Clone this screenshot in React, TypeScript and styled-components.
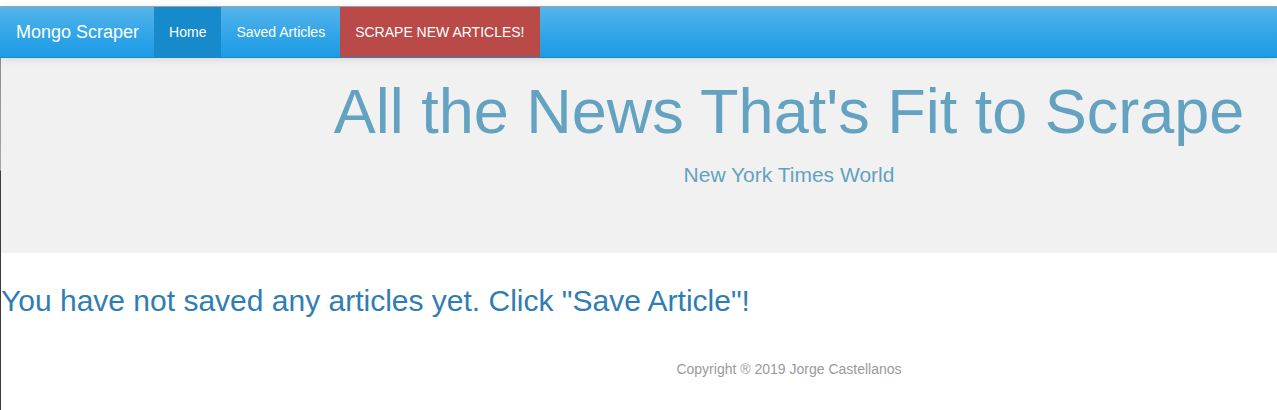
import React from "react";
import styled, { createGlobalStyle } from "styled-components";

const GlobalStyle = createGlobalStyle`
  html, body {
    margin: 0;
    padding: 0;
    background: #ffffff;
    font-family: "Liberation Sans", Arial, Helvetica, sans-serif;
  }
  * { box-sizing: border-box; }
`;

const Page = styled.div`
  position: relative;
  min-height: 410px;
  overflow: hidden;
`;

const EdgeLine = styled.div`
  position: absolute;
  left: 0;
  top: 58px;
  bottom: 0;
  width: 1px;
  background: linear-gradient(to bottom, #8c8c8c 0, #a6a6a6 112px, #3c3c3c 113px, #3c3c3c 100%);
`;

const TopStrip = styled.div`
  height: 7px;
  background: #ffffff;
  border-bottom: 1px solid #a8a8a8;
`;

const Navbar = styled.nav`
  display: flex;
  align-items: stretch;
  height: 51px;
  background-image: linear-gradient(#54b4eb, #2fa4e7 60%, #1d9ce5);
  border-bottom: 1px solid #178acc;
  box-shadow: 0 1px 8px rgba(0, 0, 0, 0.12);
  position: relative;
  z-index: 1;
`;

const Brand = styled.a`
  display: flex;
  align-items: center;
  padding: 0 15px 0 16px;
  font-size: 18px;
  color: #ffffff;
  text-decoration: none;
`;

const NavItem = styled.a<{ $variant?: "active" | "danger" }>`
  display: flex;
  align-items: center;
  padding: 0 15px;
  font-size: 14px;
  color: #ffffff;
  text-decoration: none;
  background: ${(p) =>
    p.$variant === "active" ? "#178acc" : p.$variant === "danger" ? "#b94a48" : "transparent"};
`;

const Jumbotron = styled.header`
  height: 195px;
  background: #f1f1f1;
  padding: 19px 0 0 301px;
  text-align: center;
  color: #63a2c1;
`;

const Title = styled.h1`
  margin: 0;
  font-size: 63px;
  font-weight: 400;
  line-height: 1.1;
  white-space: nowrap;
`;

const Subtitle = styled.p`
  margin: 17px 0 0;
  font-size: 21px;
  line-height: 1.1;
`;

const Message = styled.h2`
  margin: 31px 0 0;
  padding-left: 1px;
  font-size: 30px;
  font-weight: 400;
  line-height: 1.1;
  color: #2f7db3;
`;

const Footer = styled.footer`
  margin-top: 42px;
  padding-left: 301px;
  text-align: center;
  font-size: 14px;
  line-height: 20px;
  color: #9a9a9a;
`;

export default function App() {
  return (
    <Page>
      <GlobalStyle />
      <TopStrip />
      <Navbar>
        <Brand href="#">Mongo Scraper</Brand>
        <NavItem href="#" $variant="active">Home</NavItem>
        <NavItem href="#">Saved Articles</NavItem>
        <NavItem href="#" $variant="danger">SCRAPE NEW ARTICLES!</NavItem>
      </Navbar>
      <Jumbotron>
        <Title>All the News That's Fit to Scrape</Title>
        <Subtitle>New York Times World</Subtitle>
      </Jumbotron>
      <Message>You have not saved any articles yet. Click "Save Article"!</Message>
      <Footer>Copyright ® 2019 Jorge Castellanos</Footer>
      <EdgeLine />
    </Page>
  );
}
